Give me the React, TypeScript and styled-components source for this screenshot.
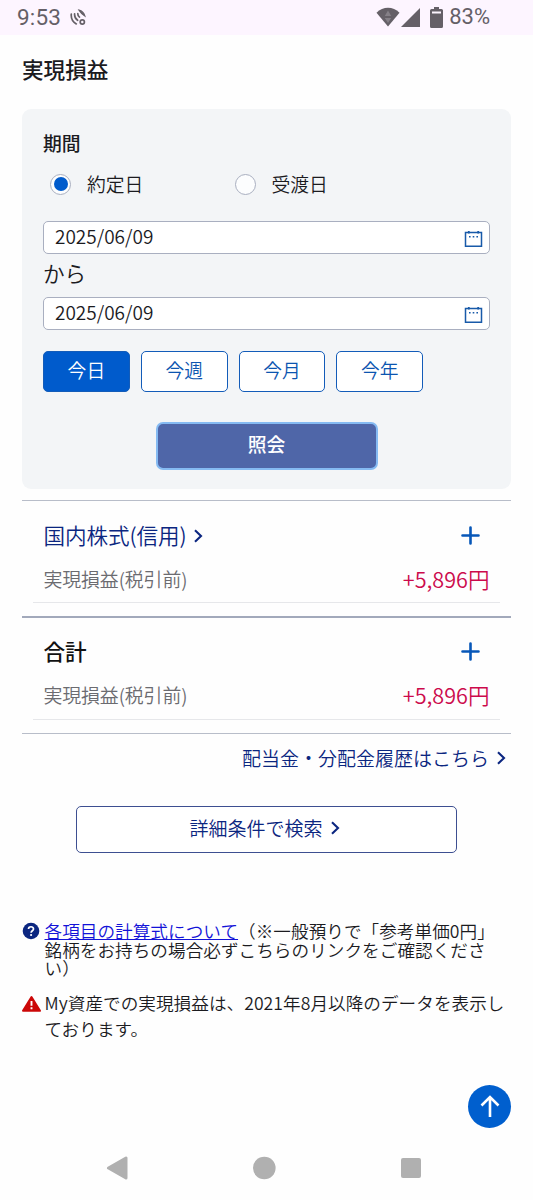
import React from 'react';
import styled, { createGlobalStyle } from 'styled-components';

const GlobalStyle = createGlobalStyle`
  *, *::before, *::after { box-sizing: border-box; }
  body {
    margin: 0;
    background: #fefefe;
    color: #1b1b1f;
    font-family: 'Noto Sans CJK JP', 'Noto Sans', sans-serif;
    font-weight: 350;
  }
  button, input { font: inherit; color: inherit; margin: 0; }
  svg { display: block; flex: none; }
`;

const Screen = styled.div`
  position: relative;
  width: 533px;
  height: 1200px;
  display: flex;
  flex-direction: column;
  overflow: hidden;
`;

const StatusBar = styled.header`
  height: 35px;
  flex: none;
  display: flex;
  align-items: center;
  padding: 0 43px 1px 17px;
  background: #fdf5ff;
  color: #656067;
  font: 400 22.5px/34px Roboto, sans-serif;
`;

const Clock = styled.span`
  margin-right: 9px;
  letter-spacing: 0.2px;
`;

const StatusIcons = styled.div`
  margin-left: auto;
  display: flex;
  align-items: center;
`;

const BatteryGroup = styled.div`
  display: flex;
  align-items: center;
  gap: 6px;
  margin-left: 10px;
  font-size: 22px;
`;

const Main = styled.main`
  flex: 1;
  padding: 0 22px;
  display: flex;
  flex-direction: column;
`;

const PageTitle = styled.h1`
  margin: 18px 0 25px;
  font-size: 21.6px;
  line-height: 31px;
  font-weight: 500;
`;

const FilterCard = styled.section`
  height: 380px;
  margin-bottom: 11px;
  padding: 20px 21px 0;
  border-radius: 9px;
  background: #f3f5f7;
`;

const FilterTitle = styled.h2`
  margin: 0;
  font-size: 18.8px;
  line-height: 28px;
  font-weight: 500;
`;

const RadioRow = styled.div`
  display: grid;
  grid-template-columns: 184.5px 1fr;
  height: 65px;
  padding-left: 7px;
`;

const RadioLabel = styled.label`
  display: flex;
  align-items: center;
  gap: 16px;
  height: 54px;
  font-size: 18.8px;
  line-height: 26px;
  padding-bottom: 1px;
`;

const RadioMark = styled.span<{ $checked?: boolean }>`
  width: 21px;
  height: 21px;
  margin-top: 1px;
  display: grid;
  place-items: center;
  border: 1px solid #a9afc0;
  border-radius: 50%;
  background: #fcfdfe;
  &::after {
    content: '';
    width: 14px;
    height: 14px;
    border-radius: 50%;
    background: ${p => (p.$checked ? '#005bcc' : 'transparent')};
  }
`;

const DateField = styled.div`
  height: 33px;
  width: 447px;
  margin-top: -1px;
  padding: 0 6.5px 0 11px;
  display: flex;
  justify-content: space-between;
  border: 1px solid #a9afc0;
  border-radius: 5px;
  background: #fff;
  font-size: 19px;
  line-height: 27px;
  svg { margin-top: 8px; }
`;

const RangeWord = styled.div`
  height: 44px;
  font-size: 21.6px;
  line-height: 37px;
`;

const PresetRow = styled.div`
  display: flex;
  gap: 11px;
  margin-top: 21px;
`;

const PresetButton = styled.button<{ $active?: boolean }>`
  width: 86.8px;
  height: 41px;
  padding: 0 0 4px;
  border: 1.5px solid #135cb9;
  border-radius: 5px;
  background: ${p => (p.$active ? '#005bcc' : '#fff')};
  color: ${p => (p.$active ? '#fff' : '#0c55b0')};
  font-size: 18.8px;
  line-height: 28px;
`;

const SubmitButton = styled.button`
  display: block;
  width: 222px;
  height: 48px;
  margin: 30px auto 0;
  padding: 0 0 4px;
  border: 2.5px solid #85baf2;
  border-radius: 7px;
  background: #4f66a8;
  color: #fff;
  font-size: 18.8px;
  line-height: 28px;
  font-weight: 500;
`;

const Summary = styled.section<{ $strong?: boolean }>`
  height: ${p => (p.$strong ? 117 : 116)}px;
  padding: 0 11px;
  border-top: ${p => (p.$strong ? '2px solid #a2a9bb' : '1px solid #b8bdc9')};
`;

const SummaryBody = styled.div<{ $strong?: boolean }>`
  height: 102px;
  padding: ${p => (p.$strong ? 18 : 19)}px 10.5px 0;
  border-bottom: 1px solid #e6e7ea;
`;

const SummaryHead = styled.div`
  display: flex;
  align-items: center;
  justify-content: space-between;
  height: 30px;
  padding-right: 10px;
`;

const SummaryName = styled.h3<{ $link?: boolean }>`
  margin: 0;
  display: flex;
  align-items: center;
  gap: 7.5px;
  font-size: 21.6px;
  line-height: 30px;
  font-weight: ${p => (p.$link ? 350 : 500)};
  color: ${p => (p.$link ? '#0b2680' : '#111')};
  letter-spacing: ${p => (p.$link ? '-0.1px' : '0')};
  svg { margin-top: 2px; }
`;

const SummaryRow = styled.div`
  display: flex;
  align-items: center;
  justify-content: space-between;
  height: 30px;
  margin-top: 14px;
  font-size: 18.9px;
  line-height: 28px;
  color: #6b6b70;
  letter-spacing: -0.1px;
`;

const Amount = styled.span`
  font-size: 21.6px;
  line-height: 30px;
  letter-spacing: 0;
  color: #cc0a4c;
`;

const HistoryLink = styled.a`
  display: flex;
  align-items: center;
  justify-content: flex-end;
  gap: 8px;
  height: 48px;
  padding: 0 5px 0 0;
  border-top: 1px solid #b8bdc9;
  font-size: 19px;
  line-height: 28px;
  color: #0b2680;
`;

const SearchButton = styled.button`
  width: 381px;
  height: 47px;
  margin: 25px auto 0;
  padding: 0 4px 4px 0;
  display: flex;
  align-items: center;
  justify-content: center;
  gap: 8px;
  border: 1.5px solid #3d4f91;
  border-radius: 5px;
  background: #fff;
  color: #0b2680;
  font-size: 19px;
  line-height: 28px;
`;

const Notes = styled.div`
  margin-top: 69px;
  display: flex;
  flex-direction: column;
  gap: 12px;
  font-size: 17.6px;
`;

const Note = styled.div<{ $line: number }>`
  display: flex;
  gap: 3px;
  line-height: ${p => p.$line}px;
  letter-spacing: 0.05px;
  white-space: nowrap;
  p { margin: 0; }
  a { color: #1212d8; text-decoration: underline; text-underline-offset: 1px; }
`;

const NoteIcon = styled.span<{ $top: number }>`
  width: 19.5px;
  flex: none;
  padding-top: ${p => p.$top}px;
`;

const TopButton = styled.button`
  position: absolute;
  right: 22px;
  bottom: 72px;
  width: 43px;
  height: 43px;
  padding: 0;
  display: grid;
  place-items: center;
  border: 0;
  border-radius: 50%;
  background: #005fce;
`;

const NavBar = styled.nav`
  height: 64px;
  flex: none;
  padding: 0 112px 0 106px;
  display: flex;
  align-items: center;
  justify-content: space-between;
`;

const Chevron = () => (
  <svg width="9" height="14" viewBox="0 0 9 14" fill="none" stroke="#0b2680" strokeWidth="2.1">
    <path d="M1 1.3 7 7l-6 5.7" />
  </svg>
);

const Plus = () => (
  <svg width="19" height="19" viewBox="0 0 19 19" stroke="#0757b8" strokeWidth="2.6" strokeLinecap="round">
    <path d="M9.5 1.5v16M1.5 9.5h16" />
  </svg>
);

const CalendarIcon = () => (
  <svg width="19" height="18" viewBox="0 0 19 18" fill="none" stroke="#185aa9" strokeWidth="1.5">
    <path d="M1.5 2.500h16v13.800h-16z" />
    <path d="M4.800 1v2.600M14.200 1v2.600" strokeWidth="1.800" />
    <path d="M5 6.800h1.600M8.700 6.800h1.600M12.400 6.800H14" />
  </svg>
);

const CallIcon = () => (
  <svg width="16" height="17" viewBox="0 0 16 17" fill="none" stroke="#656067" strokeWidth="1.7" strokeLinecap="round">
    <path d="M1.300 5.200c-.4 4.100 1.500 7.700 5 9.700M4.600 4.900c-.2 2.700.9 5 3 6.400M7.800 4.700c0 1.500.6 2.600 1.700 3.400" />
    <path d="M9 1.200c3 .7 5 2.800 5.900 5.900-2.200-1.500-4.300-3.400-5.900-5.900z" fill="#656067" strokeWidth="1.200" />
    <circle cx="12.300" cy="13" r="2.100" />
  </svg>
);

const WifiIcon = () => (
  <svg width="24" height="20" viewBox="0 0 24 20">
    <path d="M.5 5.800C7-1 17-1 23.500 5.800L12 19.500z" fill="#656067" />
    <path d="M12 3.500l3.200 5.500H8.800zM12 16l-3.200-5h6.400z" fill="#858087" />
  </svg>
);

const SignalIcon = () => (
  <svg width="20" height="19" viewBox="0 0 20 19">
    <path d="M20 0v19H1z" fill="#656067" />
  </svg>
);

const BatteryIcon = () => (
  <svg width="13" height="21" viewBox="0 0 13 21">
    <path d="M4 0h5v2h2.500Q13 2 13 3.500V19.500Q13 21 11.500 21h-10Q0 21 0 19.500V3.500Q0 2 1.500 2H4z" fill="#656067" />
    <path d="M2 4.500h9v2H2z" fill="#fdf5ff" />
  </svg>
);

const HelpIcon = () => (
  <svg width="18" height="18" viewBox="0 0 18 18">
    <circle cx="9" cy="9" r="8.300" fill="#0b2680" />
    <path d="M6.500 7.100C6.500 3.900 11.600 4 11.500 7c0 1.700-2.400 1.800-2.400 3.700" fill="none" stroke="#fff" strokeWidth="1.700" />
    <circle cx="9.100" cy="13" r="1.100" fill="#fff" />
  </svg>
);

const WarningIcon = () => (
  <svg width="20" height="18" viewBox="0 0 20 18">
    <path d="M9.500 2 18 15.800H1z" fill="#cc0808" stroke="#cc0808" strokeWidth="2" strokeLinejoin="round" />
    <path d="M9.500 6v4.800M9.500 12.300v2" stroke="#fff" strokeWidth="1.900" />
  </svg>
);

const ArrowUpIcon = () => (
  <svg width="20" height="23" viewBox="0 0 20 23" fill="none" stroke="#fff" strokeWidth="2.600">
    <path d="M10 22V2.500M1.500 10.500 10 2l8.500 8.500" />
  </svg>
);

const presets = ['今日', '今週', '今月', '今年'];

function DateRow() {
  return (
    <DateField>
      <span>2025/06/09</span>
      <CalendarIcon />
    </DateField>
  );
}

function SummaryItem({ name, link }: { name: string; link?: boolean }) {
  return (
    <Summary $strong={!link}>
      <SummaryBody $strong={!link}>
        <SummaryHead>
          <SummaryName $link={link}>{name}{link && <Chevron />}</SummaryName>
          <Plus />
        </SummaryHead>
        <SummaryRow>
          <span>実現損益(税引前)</span>
          <Amount>+5,896円</Amount>
        </SummaryRow>
      </SummaryBody>
    </Summary>
  );
}

export default function App() {
  return (
    <>
      <GlobalStyle />
      <Screen>
        <StatusBar>
          <Clock>9:53</Clock>
          <CallIcon />
          <StatusIcons>
            <WifiIcon />
            <SignalIcon />
            <BatteryGroup><BatteryIcon />83%</BatteryGroup>
          </StatusIcons>
        </StatusBar>

        <Main>
          <PageTitle>実現損益</PageTitle>

          <FilterCard>
            <FilterTitle>期間</FilterTitle>
            <RadioRow>
              <RadioLabel><RadioMark $checked />約定日</RadioLabel>
              <RadioLabel><RadioMark />受渡日</RadioLabel>
            </RadioRow>
            <DateRow />
            <RangeWord>から</RangeWord>
            <DateRow />
            <PresetRow>
              {presets.map((name, i) => (
                <PresetButton key={name} $active={i === 0}>{name}</PresetButton>
              ))}
            </PresetRow>
            <SubmitButton>照会</SubmitButton>
          </FilterCard>

          <SummaryItem name="国内株式(信用)" link />
          <SummaryItem name="合計" />

          <HistoryLink>配当金・分配金履歴はこちら<Chevron /></HistoryLink>
          <SearchButton>詳細条件で検索<Chevron /></SearchButton>

          <Notes>
            <Note $line={18.6}>
              <NoteIcon $top={0}><HelpIcon /></NoteIcon>
              <p>
                <a>各項目の計算式について</a>（※一般預りで「参考単価0円」<br />
                銘柄をお持ちの場合必ずこちらのリンクをご確認くださ<br />
                い）
              </p>
            </Note>
            <Note $line={26}>
              <NoteIcon $top={5}><WarningIcon /></NoteIcon>
              <p>
                My資産での実現損益は、2021年8月以降のデータを表示し<br />
                ております。
              </p>
            </Note>
          </Notes>
        </Main>

        <TopButton aria-label="ページの先頭へ"><ArrowUpIcon /></TopButton>

        <NavBar>
          <svg width="22" height="24" viewBox="0 0 22 24" fill="#b0b0b0" stroke="#b0b0b0" strokeWidth="3" strokeLinejoin="round">
            <path d="M2.500 12 20 2v20z" />
          </svg>
          <svg width="24" height="24" viewBox="0 0 24 24"><circle cx="11.300" cy="12" r="11.300" fill="#b0b0b0" /></svg>
          <svg width="20" height="20" viewBox="0 0 20 20"><rect width="20" height="20" rx="2" fill="#b0b0b0" /></svg>
        </NavBar>
      </Screen>
    </>
  );
}
